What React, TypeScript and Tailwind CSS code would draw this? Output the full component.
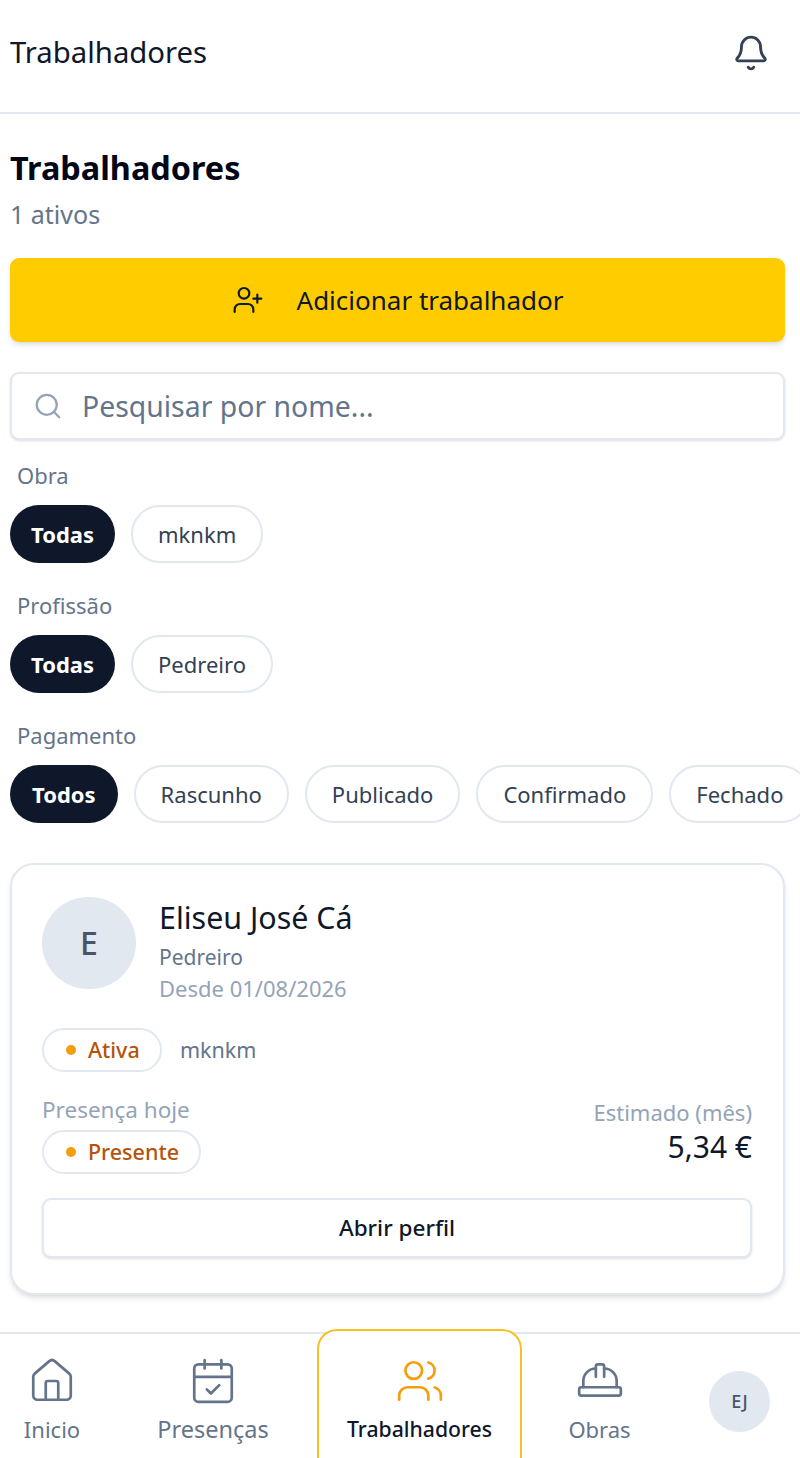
import { Bell, CalendarCheck, HardHat, House, Search, UserPlus, Users } from 'lucide-react';

const filterGroups = [
  { label: 'Obra', options: ['Todas', 'mknkm'] },
  { label: 'Profissão', options: ['Todas', 'Pedreiro'] },
  { label: 'Pagamento', options: ['Todos', 'Rascunho', 'Publicado', 'Confirmado', 'Fechado'] },
];

function FilterRow({ label, options }: { label: string; options: string[] }) {
  return (
    <div className="flex flex-col">
      <span className="pl-[7px] text-[22px] leading-[30px] text-[#64748b]">{label}</span>
      <div className="-mr-[15px] mt-[15px] flex gap-[16px] overflow-hidden">
        {options.map((option, i) => (
          <span
            key={option}
            className={
              i === 0
                ? `flex h-[58px] shrink-0 items-center rounded-full bg-[#0f172a] text-[22px] font-bold text-white ${option === 'Todos' ? 'px-[22px]' : 'px-[21px]'}`
                : 'flex h-[58px] shrink-0 items-center rounded-full border-2 border-[#e2e8f0] bg-white px-[25px] text-[22px] text-[#334155]'
            }
          >
            {option}
          </span>
        ))}
      </div>
    </div>
  );
}

function StatusBadge({ label }: { label: string }) {
  return (
    <span className="flex h-[44px] w-fit min-w-[120px] items-center gap-[12px] rounded-full border-2 border-[#e2e8f0] bg-white pl-[22px] pr-[20px] text-[21.5px] font-medium text-[#b45309]">
      <span className="h-[10px] w-[10px] rounded-full bg-[#f59e0b]" />
      {label}
    </span>
  );
}

function NavItem({ label, icon, className }: { label: string; icon: React.ReactNode; className: string }) {
  return (
    <div className={`flex flex-col items-center pt-[22px] text-[#64748b] ${className}`}>
      {icon}
      <span className="mt-[8px] text-[22px] leading-[30px]">{label}</span>
    </div>
  );
}

export default function App() {
  return (
    <div className="flex h-[1458px] w-[800px] flex-col overflow-hidden bg-white font-['Noto_Sans',sans-serif] text-[#0f172a]">
      <header className="flex h-[114px] shrink-0 items-center justify-between border-b-2 border-[#e2e8f0] pb-[6px] pl-[10px] pr-[30px]">
        <span className="text-[29.3px]">Trabalhadores</span>
        <Bell className="-mt-[1px] h-[38px] w-[38px] text-[#334155]" strokeWidth={1.8} />
      </header>

      <main className="flex flex-1 flex-col overflow-hidden pl-[10px] pr-[15px]">
        <h1 className="mt-[31px] text-[32.4px] font-bold leading-[44px] text-[#020617]">Trabalhadores</h1>
        <p className="mt-[9px] text-[25px] leading-[32px] text-[#64748b]">1 ativos</p>

        <button className="mt-[28px] flex h-[84px] shrink-0 items-center justify-center gap-[33px] rounded-[9px] bg-[#ffcc00] text-[26px] text-[#0f172a] shadow-md">
          <UserPlus className="h-[32px] w-[32px]" strokeWidth={1.6} />
          Adicionar trabalhador
        </button>

        <div className="mt-[30px] flex h-[68px] shrink-0 items-center gap-[19px] rounded-[9px] border-2 border-[#e2e8f0] bg-white pl-[21px] shadow-sm">
          <Search className="h-[30px] w-[30px] text-[#94a3b8]" strokeWidth={1.8} />
          <span className="text-[28.4px] text-[#64748b]">Pesquisar por nome...</span>
        </div>

        <div className="mt-[20px] flex flex-col gap-[27px]">
          {filterGroups.map((group) => (
            <FilterRow key={group.label} label={group.label} options={group.options} />
          ))}
        </div>

        <section className="mt-[40px] flex h-[432px] shrink-0 flex-col rounded-[24px] border-2 border-[#e2e8f0] bg-white pl-[30px] pr-[31px] pt-[32px] shadow-md">
          <div className="flex gap-[23px]">
            <div className="flex h-[92px] w-[94px] shrink-0 items-center justify-center rounded-full bg-[#e2e8f0] text-[32px] font-medium text-[#475569]">
              E
            </div>
            <div className="flex flex-col">
              <span className="text-[30.4px] leading-[42px]">Eliseu José Cá</span>
              <span className="mt-[2px] text-[21px] leading-[32px] text-[#64748b]">Pedreiro</span>
              <span className="-mt-[1px] text-[22px] leading-[32px] text-[#94a3b8]">Desde 01/08/2026</span>
            </div>
          </div>

          <div className="mt-[24px] flex items-center gap-[18px]">
            <StatusBadge label="Ativa" />
            <span className="text-[21.5px] text-[#64748b]">mknkm</span>
          </div>

          <div className="mt-[23px] flex items-end justify-between">
            <div className="flex flex-col gap-[5px]">
              <span className="text-[22.5px] leading-[30px] text-[#94a3b8]">Presença hoje</span>
              <StatusBadge label="Presente" />
            </div>
            <div className="flex flex-col items-end pb-[7px]">
              <span className="text-[22px] leading-[30px] text-[#94a3b8]">Estimado (mês)</span>
              <span className="text-[30px] leading-[40px]">5,34 €</span>
            </div>
          </div>

          <button className="mt-[24px] flex h-[60px] shrink-0 items-center justify-center rounded-[9px] border-2 border-[#e2e8f0] bg-white text-[22.5px] font-medium shadow-sm">
            Abrir perfil
          </button>
        </section>
      </main>

      <nav className="flex h-[126px] shrink-0 items-start border-t-2 border-[#e2e8f0]">
        <NavItem
          className="w-[104px]"
          label="Inicio"
          icon={<House className="h-[50px] w-[50px]" strokeWidth={1.3} />}
        />
        <NavItem
          className="ml-[29px] w-[160px] [&>span]:text-[23.5px]"
          label="Presenças"
          icon={<CalendarCheck className="h-[50px] w-[50px]" strokeWidth={1.3} />}
        />
        <div className="-mt-[5px] ml-[24px] flex h-[131px] w-[205px] flex-col items-center rounded-t-[20px] border-2 border-b-0 border-[#fbbf24] bg-white pt-[25px] text-[#0f172a]">
          <Users className="h-[50px] w-[50px] text-[#f59e0b]" strokeWidth={1.3} />
          <span className="mt-[8px] text-[21.2px] font-medium leading-[30px]">Trabalhadores</span>
        </div>
        <NavItem
          className="w-[155px]"
          label="Obras"
          icon={<HardHat className="h-[50px] w-[50px]" strokeWidth={1.3} />}
        />
        <div className="ml-[32px] mt-[37px] flex h-[61px] w-[61px] items-center justify-center rounded-full bg-[#e2e8f0] text-[18px] font-medium text-[#475569]">
          EJ
        </div>
      </nav>
    </div>
  );
}
